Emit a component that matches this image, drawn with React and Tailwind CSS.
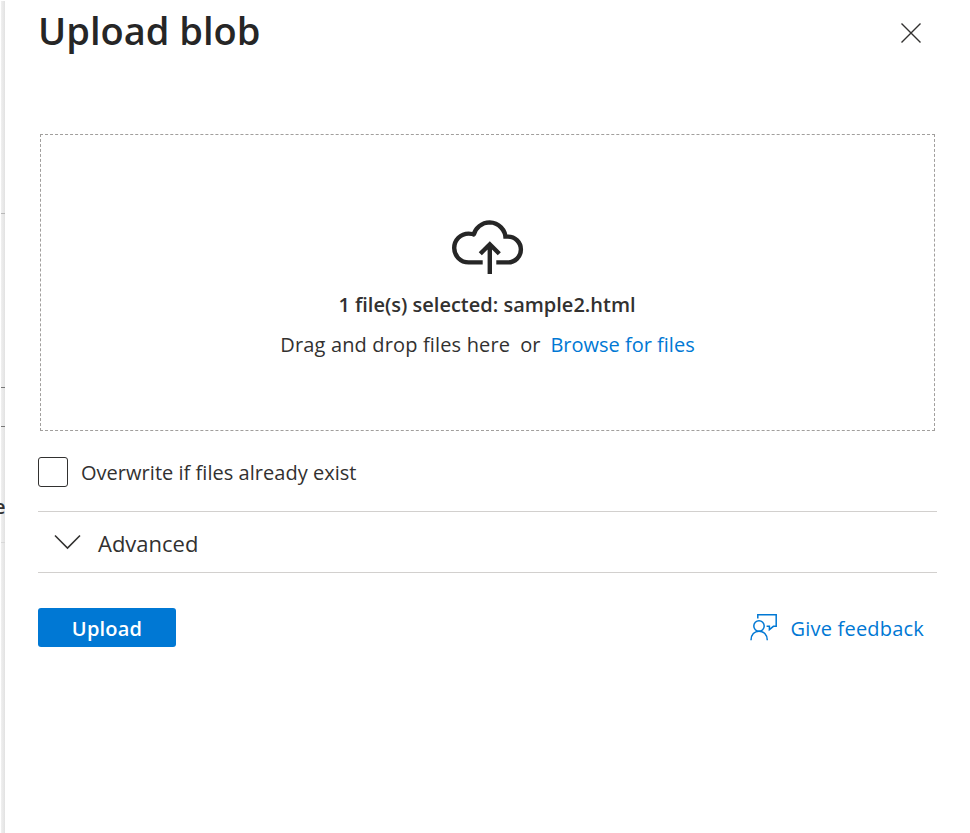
function CloudUpload() {
  return (
    <svg width="73" height="56" viewBox="0 0 73 56" fill="none" stroke="#262626" strokeWidth="4.4">
      <path d="M31.7 43.4H17.6A14.4 14.4 0 0 1 17.6 14.6Q21.3 14.6 24.2 16M22.5 16.3A16.8 16.3 0 0 1 38.7 3.4A16.3 16.3 0 0 1 54.6 19.8M52.5 17.6H57A12.9 12.9 0 0 1 57 43.4H45.3" />
      <path d="M38.8 55V26M29.3 34.8L38.8 25.3L48.3 34.8" />
    </svg>
  );
}

function FeedbackIcon() {
  return (
    <svg className="-ml-px -mt-[2px] mr-px" width="28" height="28" viewBox="0 0 28 28" fill="none" stroke="#0078d4" strokeWidth="1.5">
      <circle cx="9" cy="13" r="5.2" />
      <path d="M1 27.2C1 21.5 4.5 18.2 9 18.2S17.3 21.5 17.3 27.2M7.8 5.5V1.8H26.2V13.3H23.4L19.4 16.6V13.3H16.6" />
    </svg>
  );
}

function BackdropEdge() {
  return (
    <div className="relative w-[5px] shrink-0 overflow-hidden pl-px pt-px">
      <div className="h-full bg-linear-to-r from-[#f0f0f0] to-[#e2e2e2]" />
      <div className="absolute left-px top-[213px] h-px w-1 bg-[#b8b8b8]" />
      <div className="absolute left-px top-[387px] h-px w-1 bg-[#777777]" />
      <div className="absolute left-px top-[426px] h-px w-1 bg-[#777777]" />
      <div className="absolute left-px top-[542px] h-px w-1 bg-[#d8d8d8]" />
      <span className="absolute -left-[6px] top-[493px] text-[20px] font-semibold leading-7">e</span>
    </div>
  );
}

export default function App() {
  return (
    <div className="flex h-[833px] w-[970px] overflow-hidden bg-white font-['Open_Sans','Noto_Sans',sans-serif] text-[#323130]">
      <BackdropEdge />
      <main className="flex w-[932px] flex-col pl-[33px]">
        <header className="flex h-[134px] items-start justify-between pr-4">
          <h1 className="mt-[2px] whitespace-nowrap text-[38px] font-semibold leading-[56px] text-[#262626]">Upload blob</h1>
          <button aria-label="Close" className="mt-[23px]">
            <svg width="20" height="20" viewBox="0 0 20 20" stroke="#323130" strokeWidth="1.4"><path d="M.5.5L19.5 19.5M19.5.5L.5 19.5" /></svg>
          </button>
        </header>
        <section className="ml-[2px] mr-[2px] flex h-[297px] flex-col items-center border border-dashed border-[#a19f9d] pt-[84px]">
          <CloudUpload />
          <p className="mt-4 whitespace-nowrap pr-px text-[20px] font-semibold leading-7">1 file(s) selected: sample2.html</p>
          <p className="mt-3 flex gap-[10px] whitespace-nowrap text-[20px] leading-7">
            <span className="tracking-[0.15px]">Drag and drop files here</span><span>or</span><a className="text-[#0078d4]">Browse for files</a>
          </p>
        </section>
        <label className="mt-[26px] flex h-[30px] items-center gap-[13px] text-[20px]">
          <span className="size-[30px] rounded-[3px] border border-[#323130]" />
          <span className="mt-[2px] whitespace-nowrap tracking-[0.03px]">Overwrite if files already exist</span>
        </label>
        <section className="mt-6 flex h-[62px] items-center gap-[17px] border-y border-[#d2d0ce] pl-4 text-[22px]">
          <svg width="27" height="16" viewBox="0 0 27 16" fill="none" stroke="#323130" strokeWidth="1.6"><path d="M1 1.5L13.5 14L26 1.5" /></svg>
          <span className="mt-[2px]">Advanced</span>
        </section>
        <footer className="mt-[35px] flex h-[39px] items-center justify-between pr-[13px] text-[20px]">
          <button className="h-[39px] w-[138px] rounded-[3px] bg-[#0078d4] pt-[2px] font-semibold tracking-[0.2px] text-white">Upload</button>
          <a className="flex items-center gap-3 whitespace-nowrap text-[#0078d4]"><FeedbackIcon /><span className="mt-[2px] tracking-[0.2px]">Give feedback</span></a>
        </footer>
      </main>
    </div>
  );
}
